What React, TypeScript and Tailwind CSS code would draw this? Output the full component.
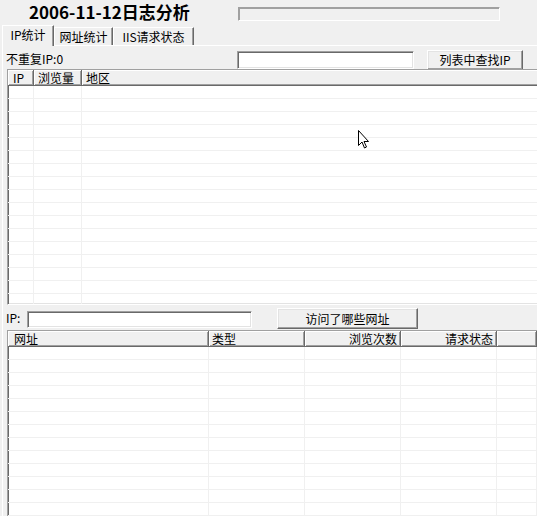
import React from 'react';

// classic win32 bevels
const sunken =
  'border border-t-[#a0a0a0] border-l-[#a0a0a0] border-b-white border-r-white shadow-[inset_1px_1px_0_#696969,inset_-1px_-1px_0_#e3e3e3]';
const raised =
  'border border-t-white border-l-white border-b-[#696969] border-r-[#696969] shadow-[inset_-1px_-1px_0_#a0a0a0,inset_1px_1px_0_#e3e3e3]';
const headCell =
  'h-[16px] shrink-0 border-b border-r border-[#696969] bg-[#f0f0f0] leading-[15px] shadow-[inset_1px_1px_0_#fff,inset_-1px_-1px_0_#a0a0a0] whitespace-nowrap overflow-hidden';

type Col = { label: string; w: string; align?: 'right'; pad?: string };

function ListView({ cols, rows, className = '' }: { cols: Col[]; rows: number; className?: string }) {
  return (
    <div className={`flex flex-col overflow-hidden bg-white ${sunken} ${className}`}>
      <div className="flex">
        {cols.map((c) => (
          <div
            key={c.label + c.w}
            className={`${headCell} ${c.w} ${c.align === 'right' ? 'pr-[3px] text-right' : c.pad ?? 'pl-[4px]'}`}
          >
            {c.label}
          </div>
        ))}
      </div>
      {Array.from({ length: rows }).map((_, i) => (
        <div key={i} className="flex h-[13px] shrink-0 border-b border-[#f0f0f0]">
          {cols.map((c) => (
            <div key={c.label + c.w} className={`${c.w} shrink-0 border-r border-[#f0f0f0]`} />
          ))}
        </div>
      ))}
    </div>
  );
}

export default function App() {
  return (
    <div className="relative flex h-[516px] w-[537px] flex-col overflow-hidden bg-[#f0f0f0] font-['Noto_Sans_CJK_SC',sans-serif] text-[12px] text-black">
      {/* title + progress */}
      <div className="flex h-[25px] shrink-0 items-start">
        <div className="w-[238px] pl-[29px] pt-[1px] text-[17px] font-bold leading-[21px]">2006-11-12日志分析</div>
        <div className="mt-[7px] h-[14px] w-[262px] border border-t-[#a0a0a0] border-l-[#a0a0a0] border-b-white border-r-white shadow-[inset_1px_1px_0_#a0a0a0]" />
      </div>

      {/* tabs */}
      <div className="flex h-[20px] shrink-0 items-end pl-[2px]">
        <div className="relative z-10 -mb-px flex h-[21px] w-[52px] items-start justify-center border-l border-t border-r border-l-white border-t-white border-r-[#696969] bg-[#f0f0f0] pt-[1px] leading-[16px] shadow-[inset_-1px_0_0_#a0a0a0]">
          IP统计
        </div>
        <div className="flex h-[18px] w-[59px] items-start justify-center border-l border-t border-r border-l-white border-t-white border-r-[#696969] pt-[1px] leading-[16px] shadow-[inset_-1px_0_0_#a0a0a0]">
          网址统计
        </div>
        <div className="flex h-[18px] w-[81px] items-start justify-center border-l border-t border-r border-l-white border-t-white border-r-[#696969] pt-[1px] leading-[16px] shadow-[inset_-1px_0_0_#a0a0a0]">
          IIS请求状态
        </div>
      </div>

      {/* tab page */}
      <div className="ml-[2px] flex flex-1 flex-col border-l border-t border-white">
        <div className="flex h-[23px] shrink-0 items-start">
          <div className="mt-[6px] w-[234px] pl-[3px] leading-[14px]">不重复IP:0</div>
          <div className={`mt-[5px] h-[18px] w-[177px] bg-white ${sunken}`} />
          <button className={`ml-[13px] mt-[4px] h-[20px] w-[96px] bg-[#f0f0f0] leading-[16px] ${raised}`}>
            列表中查找IP
          </button>
        </div>

        <ListView
          className="ml-[4px] h-[236px] w-[560px] shrink-0"
          rows={17}
          cols={[
            { label: 'IP', w: 'w-[26px]', pad: 'pl-[5px]' },
            { label: '浏览量', w: 'w-[48px]' },
            { label: '地区', w: 'w-[480px]' },
          ]}
        />

        <div className="flex h-[25px] shrink-0 items-start">
          <div className="mt-[6px] w-[24px] pl-[3px] leading-[14px]">IP:</div>
          <div className={`mt-[6px] h-[17px] w-[225px] bg-white ${sunken}`} />
          <button className={`ml-[25px] mt-[3px] h-[21px] w-[141px] bg-[#f0f0f0] leading-[16px] ${raised}`}>
            访问了哪些网址
          </button>
        </div>

        <ListView
          className="ml-[4px] h-[200px] w-[560px] shrink-0"
          rows={14}
          cols={[
            { label: '网址', w: 'w-[201px]', pad: 'pl-[6px]' },
            { label: '类型', w: 'w-[96px]', pad: 'pl-[3px]' },
            { label: '浏览次数', w: 'w-[96px]', align: 'right' },
            { label: '请求状态', w: 'w-[96px]', align: 'right' },
            { label: '', w: 'w-[40px]' },
            { label: ' ', w: 'w-[40px]' },
          ]}
        />
      </div>

      {/* mouse pointer */}
      <svg className="absolute left-[358px] top-[130px]" width="13" height="20" viewBox="0 0 13 20">
        <path
          d="M0.5 0.5 L0.5 15.5 L4 12 L6.5 18 L8.5 17 L6 11.5 L10.5 11.5 Z"
          fill="#fff"
          stroke="#000"
          strokeWidth="1"
          strokeLinejoin="miter"
        />
      </svg>
    </div>
  );
}
